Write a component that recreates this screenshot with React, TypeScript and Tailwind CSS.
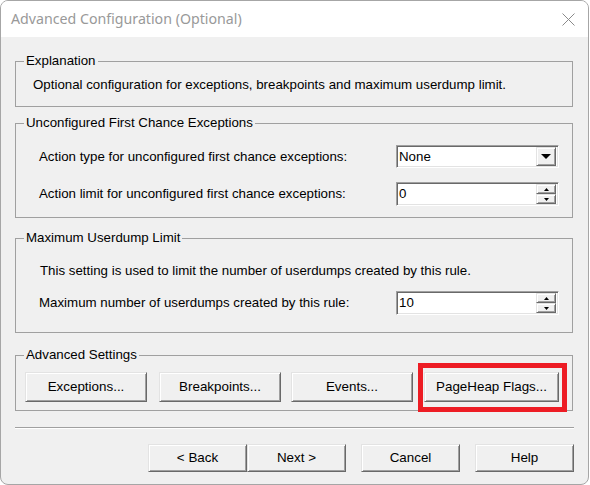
import React from 'react'

const raised =
  'border border-t-[#e3e3e3] border-l-[#e3e3e3] border-b-[#696969] border-r-[#696969] shadow-[inset_1px_1px_0_#ffffff,inset_-1px_-1px_0_#a0a0a0] bg-[#f0f0f0]'
const sunken =
  'border border-t-[#a0a0a0] border-l-[#a0a0a0] border-b-[#ffffff] border-r-[#ffffff] shadow-[inset_1px_1px_0_#696969,inset_-1px_-1px_0_#e3e3e3] bg-white'

function GroupBox({ title, className, children }: { title: string; className: string; children: React.ReactNode }) {
  return (
    <div className={`relative ml-[14px] w-[558px] border border-[#a0a0a0] ${className}`}>
      {/* label sits on the top border */}
      <span className="absolute -top-[9px] left-[8px] bg-[#f0f0f0] px-[2px] leading-[16px]">{title}</span>
      {children}
    </div>
  )
}

function Button({ label, w }: { label: string; w: string }) {
  return (
    <button className={`${raised} ${w} h-full flex items-center justify-center text-[13.4px] text-black`}>
      {label}
    </button>
  )
}

function Combo({ value }: { value: string }) {
  return (
    <div className={`${sunken} w-[163px] h-[23px] flex items-center justify-between pl-[2px] pr-[2px]`}>
      <span className="leading-none">{value}</span>
      <div className={`${raised} w-[20px] h-[19px] flex items-center justify-center`}>
        <svg width="10" height="5" viewBox="0 0 10 5">
          <path d="M0 0h10L5 5z" fill="#000" />
        </svg>
      </div>
    </div>
  )
}

function Spin({ value }: { value: string }) {
  return (
    <div className={`${sunken} w-[163px] h-[24px] flex items-center justify-between pl-[2px] pr-[2px]`}>
      <span className="leading-none">{value}</span>
      <div className="flex flex-col w-[20px] h-[20px]">
        <div className={`${raised} flex-1 flex items-center justify-center`}>
          <svg width="5" height="3" viewBox="0 0 5 3">
            <path d="M2.5 0L5 3H0z" fill="#000" />
          </svg>
        </div>
        <div className={`${raised} flex-1 flex items-center justify-center`}>
          <svg width="5" height="3" viewBox="0 0 5 3">
            <path d="M0 0h5L2.5 3z" fill="#000" />
          </svg>
        </div>
      </div>
    </div>
  )
}

export default function App() {
  return (
    <div className="w-[590px] h-[485px] bg-white">
      <div
        className="w-[589px] h-[485px] border border-[#a6a6a6] rounded-[8px] overflow-hidden flex flex-col bg-[#f0f0f0] text-[13.3px] text-black"
        style={{ fontFamily: '"Liberation Sans", Arial, sans-serif' }}
      >
        {/* Title bar */}
        <div className="h-[36px] shrink-0 bg-white flex items-center justify-between pl-[10px] pr-[13px]">
          <span className="text-[14.2px] text-[#999999]" style={{ fontFamily: '"Noto Sans", "Open Sans", sans-serif' }}>
            Advanced Configuration (Optional)
          </span>
          <svg width="13" height="13" viewBox="0 0 13 13">
            <path d="M0.5 0.5L12.5 12.5M12.5 0.5L0.5 12.5" stroke="#8a8a8a" strokeWidth="1" />
          </svg>
        </div>

        <GroupBox title="Explanation" className="mt-[24px] h-[46px]">
          <p className="pl-[17px] pt-[15px] leading-[16px]">
            Optional configuration for exceptions, breakpoints and maximum userdump limit.
          </p>
        </GroupBox>

        <GroupBox title="Unconfigured First Chance Exceptions" className="mt-[16px] h-[95px]">
          <div className="flex items-center justify-between pl-[23px] pr-[13px] mt-[21px]">
            <span>Action type for unconfigured first chance exceptions:</span>
            <Combo value="None" />
          </div>
          <div className="flex items-center justify-between pl-[23px] pr-[13px] mt-[14px]">
            <span>Action limit for unconfigured first chance exceptions:</span>
            <Spin value="0" />
          </div>
        </GroupBox>

        <GroupBox title="Maximum Userdump Limit" className="mt-[20px] h-[95px]">
          <p className="pl-[24px] pt-[24px] leading-[16px]">
            This setting is used to limit the number of userdumps created by this rule.
          </p>
          <div className="flex items-center justify-between pl-[23px] pr-[13px] mt-[12px]">
            <span>Maximum number of userdumps created by this rule:</span>
            <Spin value="10" />
          </div>
        </GroupBox>

        <GroupBox title="Advanced Settings" className="mt-[22px] h-[56px]">
          <div className="flex h-[30px] mt-[16px] pl-[9px]">
            <Button label="Exceptions..." w="w-[122px]" />
            <div className="ml-[12px]">
              <Button label="Breakpoints..." w="w-[122px]" />
            </div>
            <div className="ml-[10px]">
              <Button label="Events..." w="w-[122px]" />
            </div>
            <div className="relative ml-[11px]">
              <Button label="PageHeap Flags..." w="w-[135px]" />
              <div className="absolute -left-[6px] -right-[8px] -top-[9px] -bottom-[10px] border-[5px] border-[#ed1c24]" />
            </div>
          </div>
        </GroupBox>

        {/* separator */}
        <div className="ml-[14px] w-[559px] mt-[16px] h-[2px] border-t border-t-[#a0a0a0] border-b border-b-white" />

        <div className="flex h-[28px] mt-[15px] pl-[147px]">
          <Button label="< Back" w="w-[99px]" />
          <Button label="Next >" w="w-[99px]" />
          <div className="ml-[15px]">
            <Button label="Cancel" w="w-[99px]" />
          </div>
          <div className="ml-[15px]">
            <Button label="Help" w="w-[99px]" />
          </div>
        </div>
      </div>
    </div>
  )
}
